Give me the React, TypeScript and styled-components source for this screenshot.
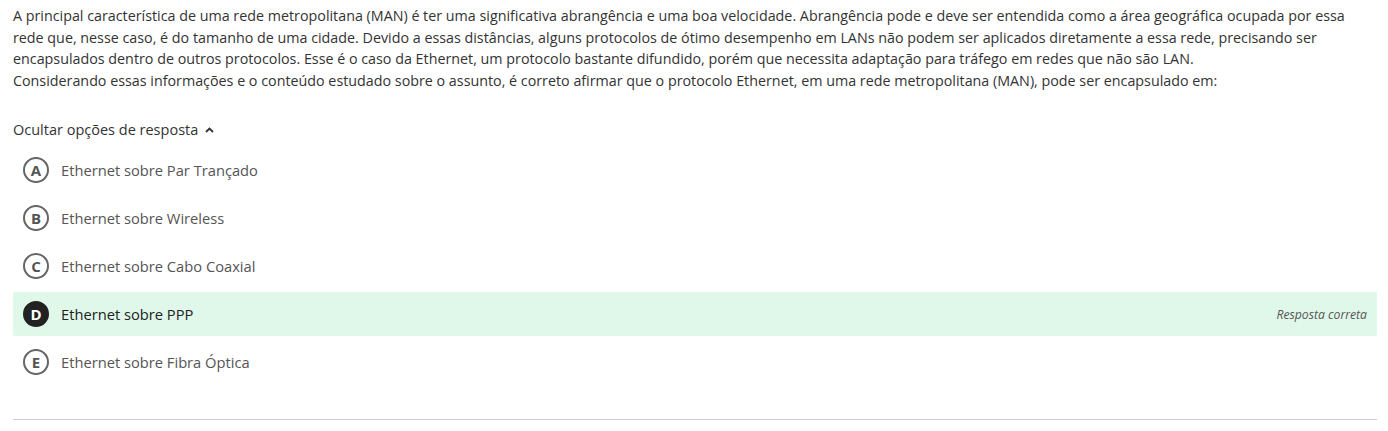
import React from "react";
import styled, { createGlobalStyle } from "styled-components";

const Global = createGlobalStyle`
  html, body { margin: 0; padding: 0; background: #fff; }
  body { font-family: "Open Sans", "Noto Sans", sans-serif; color: #333; }
`;

const Page = styled.div`
  padding: 5px 11px 0 13px;
`;

const Question = styled.div`
  font-size: 14.3px;
  line-height: 21.6px;
  color: #333;
`;

const Para = styled.p`
  margin: 0;
`;

const Toggle = styled.button`
  display: flex;
  align-items: center;
  gap: 7px;
  margin-top: 28px;
  padding: 0;
  border: 0;
  background: none;
  font-family: inherit;
  font-size: 14.5px;
  line-height: 22px;
  color: #333;
  cursor: pointer;
`;

const Options = styled.ul`
  list-style: none;
  margin: 7px 0 0;
  padding: 0;
  display: flex;
  flex-direction: column;
  gap: 4px;
`;

const Row = styled.li<{ $correct?: boolean }>`
  display: flex;
  align-items: center;
  height: 44px;
  padding: 0 10px;
  border-radius: 2px;
  background: ${(p) => (p.$correct ? "#e0f8ea" : "transparent")};
`;

const Letter = styled.span<{ $filled?: boolean }>`
  box-sizing: border-box;
  width: 26px;
  height: 26px;
  border-radius: 50%;
  display: flex;
  align-items: center;
  justify-content: center;
  font-size: 15px;
  font-weight: 700;
  border: 2px solid ${(p) => (p.$filled ? "#222" : "#666")};
  background: ${(p) => (p.$filled ? "#222" : "transparent")};
  color: ${(p) => (p.$filled ? "#fff" : "#555")};
  flex-shrink: 0;
`;

const Label = styled.span<{ $strong?: boolean }>`
  margin-left: 12px;
  font-size: 14.7px;
  color: ${(p) => (p.$strong ? "#222" : "#555")};
  flex: 1;
`;

const Note = styled.span`
  font-size: 12.2px;
  font-style: italic;
  color: #555;
`;

const Divider = styled.hr`
  margin: 35px 0 0;
  border: 0;
  border-top: 1px solid #ccc;
`;

const options = [
  { l: "A", t: "Ethernet sobre Par Trançado" },
  { l: "B", t: "Ethernet sobre Wireless" },
  { l: "C", t: "Ethernet sobre Cabo Coaxial" },
  { l: "D", t: "Ethernet sobre PPP", correct: true },
  { l: "E", t: "Ethernet sobre Fibra Óptica" },
];

export default function App() {
  return (
    <Page>
      <Global />
      <Question>
        <Para>
          A principal característica de uma rede metropolitana (MAN) é ter uma significativa abrangência e uma boa velocidade. Abrangência pode e deve ser entendida como a área geográfica ocupada por essa rede que, nesse caso, é do tamanho de uma cidade. Devido a essas distâncias, alguns protocolos de ótimo desempenho em LANs não podem ser aplicados diretamente a essa rede, precisando ser encapsulados dentro de outros protocolos. Esse é o caso da Ethernet, um protocolo bastante difundido, porém que necessita adaptação para tráfego em redes que não são LAN.
        </Para>
        <Para>
          Considerando essas informações e o conteúdo estudado sobre o assunto, é correto afirmar que o protocolo Ethernet, em uma rede metropolitana (MAN), pode ser encapsulado em:
        </Para>
      </Question>
      <Toggle>
        Ocultar opções de resposta
        <svg width="9" height="6" viewBox="0 0 9 6">
          <path d="M1 5 L4.5 1.5 L8 5" fill="none" stroke="#333" strokeWidth="1.8" />
        </svg>
      </Toggle>
      <Options>
        {options.map((o) => (
          <Row key={o.l} $correct={o.correct}>
            <Letter $filled={o.correct}>{o.l}</Letter>
            <Label $strong={o.correct}>{o.t}</Label>
            {o.correct && <Note>Resposta correta</Note>}
          </Row>
        ))}
      </Options>
      <Divider />
    </Page>
  );
}
